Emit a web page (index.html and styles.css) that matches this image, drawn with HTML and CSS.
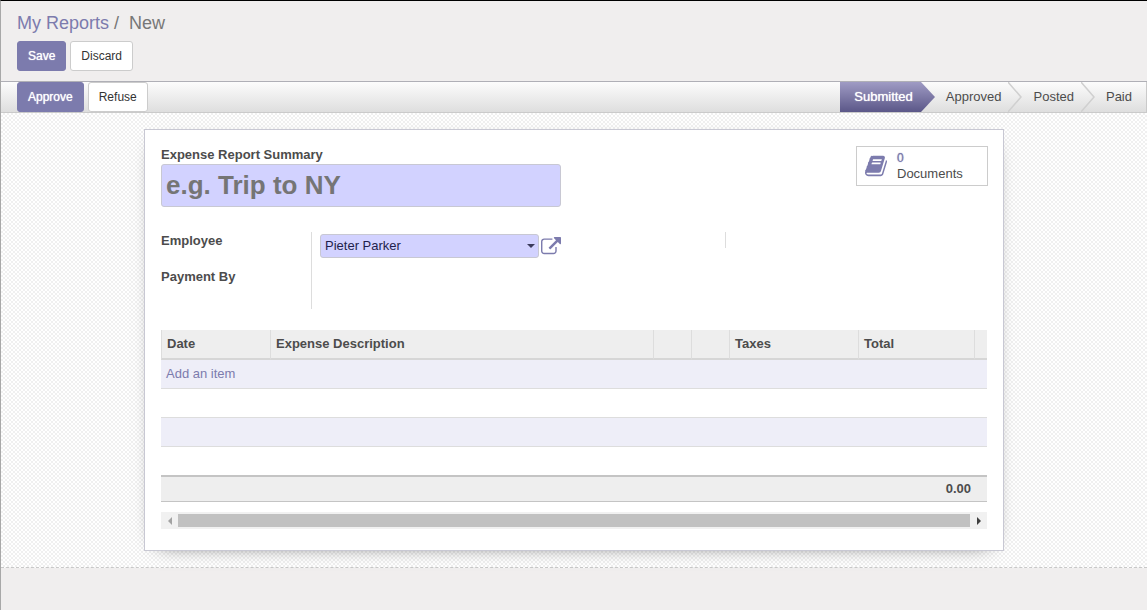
FILE: index.html
```html
<!DOCTYPE html>
<html lang="en">
<head>
    <meta charset="UTF-8">
    <meta name="viewport" content="width=device-width, initial-scale=1.0">
    <title>My Reports / New</title>
    <link rel="stylesheet" href="styles.css">
</head>
<body>
    <header class="control-panel">
        <nav class="breadcrumb">
            <a href="#">My Reports</a>
            <span>/</span>
            <span class="current">New</span>
        </nav>
        <div class="buttons">
            <button class="btn btn-primary" type="button">Save</button>
            <button class="btn" type="button">Discard</button>
        </div>
    </header>

    <div class="statusbar">
        <div class="buttons">
            <button class="btn btn-primary" type="button">Approve</button>
            <button class="btn" type="button">Refuse</button>
        </div>
        <ol class="steps">
            <li class="step active">
                <span class="step-name">Submitted</span>
                <svg class="step-arrow" viewBox="0 0 14 30">
                    <defs>
                        <linearGradient id="arrow-fill" x1="0" y1="0" x2="0" y2="1">
                            <stop offset="0" stop-color="#9f9bc4"/>
                            <stop offset="1" stop-color="#5b5788"/>
                        </linearGradient>
                    </defs>
                    <path d="M0 0L14 15L0 30z" fill="url(#arrow-fill)"/>
                </svg>
            </li>
            <li class="step">
                <span class="step-name">Approved</span>
                <svg class="step-arrow" viewBox="0 0 14 30"><path d="M0 0L13 15L0 30" fill="none" stroke="#d0d0d0" stroke-width="1.5"/></svg>
            </li>
            <li class="step">
                <span class="step-name">Posted</span>
                <svg class="step-arrow" viewBox="0 0 14 30"><path d="M0 0L13 15L0 30" fill="none" stroke="#d0d0d0" stroke-width="1.5"/></svg>
            </li>
            <li class="step">
                <span class="step-name">Paid</span>
            </li>
        </ol>
    </div>

    <main class="form-bg">
        <form class="sheet">
            <div class="sheet-head">
                <div class="title">
                    <label for="summary">Expense Report Summary</label>
                    <input type="text" id="summary" placeholder="e.g. Trip to NY">
                </div>
                <button class="stat-button" type="button">
                    <svg class="book" viewBox="0 0 1664 1792"><path fill="currentColor" d="M1639 478q40 57 18 129l-275 906q-19 64-76.5 107.5t-122.5 43.5h-923q-77 0-148.5-53.5t-99.5-131.5q-24-67-2-127 0-4 3-27t4-37q1-8-3-21.5t-3-19.5q2-11 8-21t16.5-23.5 16.5-23.5q23-38 45-91.5t30-91.5q3-10 .5-30t-.5-28q3-11 17-28t17-23q21-36 42-92t25-90q1-9-2.5-32t.5-28q4-13 22-30.5t22-22.5q19-26 42.5-84.5t27.5-96.5q1-8-3-25.5t-2-26.5q2-8 9-18t18-23 17-21q8-12 16.5-30.5t15-35 16-36 19.5-32 26.5-23.5 36-11.5 47.5 5.5l-1 3q38-9 51-9h761q74 0 114 56t18 130l-274 906q-36 119-71.5 153.5t-128.5 34.5h-869q-27 0-38 15-11 16-1 43 24 70 144 70h923q29 0 56-15.5t35-41.5l300-987q7-22 5-57 38 15 59 43zm-1064 2q-4 13 2 22.5t20 9.5h608q13 0 25.5-9.5t16.5-22.5l21-64q4-13-2-22.5t-20-9.5h-608q-13 0-25.5 9.5t-16.5 22.5zm-83 256q-4 13 2 22.5t20 9.5h608q13 0 25.5-9.5t16.5-22.5l21-64q4-13-2-22.5t-20-9.5h-608q-13 0-25.5 9.5t-16.5 22.5z"/></svg>
                    <span class="stat-info">
                        <span class="stat-value">0</span>
                        <span>Documents</span>
                    </span>
                </button>
            </div>

            <div class="groups">
                <div class="group">
                    <div class="labels">
                        <label for="employee">Employee</label>
                        <span>Payment By</span>
                    </div>
                    <div class="values">
                        <div class="select-wrap">
                            <select id="employee">
                                <option>Pieter Parker</option>
                            </select>
                            <svg class="caret" viewBox="0 0 8 4"><path d="M0 0h8L4 4z" fill="#3b3b5c"/></svg>
                        </div>
                        <button class="link-button" type="button" aria-label="External link">
                            <svg viewBox="0 0 1792 1792"><path fill="currentColor" d="M1408 928v320q0 119-84.5 203.5t-203.5 84.5h-832q-119 0-203.5-84.5t-84.5-203.5v-832q0-119 84.5-203.5t203.5-84.5h704q14 0 23 9t9 23v64q0 14-9 23t-23 9h-704q-66 0-113 47t-47 113v832q0 66 47 113t113 47h832q66 0 113-47t47-113v-320q0-14 9-23t23-9h64q14 0 23 9t9 23zm384-864v512q0 26-19 45t-45 19-45-19l-176-176-652 652q-10 10-23 10t-23-10l-114-114q-10-10-10-23t10-23l652-652-176-176q-19-19-19-45t19-45 45-19h512q26 0 45 19t19 45z"/></svg>
                        </button>
                    </div>
                </div>
                <div class="group group-empty">
                    <div class="labels"></div>
                    <div class="values"></div>
                </div>
            </div>

            <table class="lines">
                <colgroup>
                    <col class="col-date">
                    <col>
                    <col class="col-small">
                    <col class="col-small">
                    <col class="col-taxes">
                    <col class="col-total">
                    <col class="col-delete">
                </colgroup>
                <thead>
                    <tr>
                        <th>Date</th>
                        <th>Expense Description</th>
                        <th></th>
                        <th></th>
                        <th>Taxes</th>
                        <th>Total</th>
                        <th></th>
                    </tr>
                </thead>
                <tbody>
                    <tr><td colspan="7"><a href="#">Add an item</a></td></tr>
                    <tr><td colspan="7"></td></tr>
                    <tr><td colspan="7"></td></tr>
                    <tr><td colspan="7"></td></tr>
                </tbody>
                <tfoot>
                    <tr>
                        <td colspan="6">0.00</td>
                        <td></td>
                    </tr>
                </tfoot>
            </table>

            <div class="scrollbar">
                <button class="scroll-button" type="button" aria-label="Scroll left">
                    <svg viewBox="0 0 4 8"><path d="M4 0v8L0 4z" fill="#a3a3a3"/></svg>
                </button>
                <div class="thumb"></div>
                <button class="scroll-button" type="button" aria-label="Scroll right">
                    <svg viewBox="0 0 4 8"><path d="M0 0v8l4-4z" fill="#404040"/></svg>
                </button>
            </div>
        </form>
    </main>
</body>
</html>
```
FILE: styles.css
```css
* {
    box-sizing: border-box;
}

body {
    display: flex;
    flex-direction: column;
    min-height: 100vh;
    margin: 0;
    border-top: 1px solid #000;
    border-left: 1px solid #a8a8a8;
    background: #f0eeee;
    color: #4c4c4c;
    font-family: "Liberation Sans", Arial, sans-serif;
    font-size: 13px;
    line-height: 20px;
}

a {
    color: #7c7bad;
    text-decoration: none;
}

button,
input,
select {
    font-family: inherit;
}

.control-panel {
    padding: 10px 16px;
}

.breadcrumb {
    display: flex;
    gap: 5px;
    margin-bottom: 6px;
    font-size: 18px;
    line-height: 24px;
    color: #777;
}

.breadcrumb .current {
    margin-left: 5px;
}

.buttons {
    display: flex;
    gap: 4px;
}

.btn {
    height: 30px;
    padding: 0 10px;
    border: 1px solid #ccc;
    border-radius: 3px;
    background: #fff;
    color: #333;
    font-size: 12px;
    cursor: pointer;
}

.btn-primary {
    border-color: #7c7bad;
    background: #7c7bad;
    color: #fff;
    text-shadow: 0 0 1px #fff;
}

.statusbar {
    display: flex;
    justify-content: space-between;
    border-top: 1px solid #afafb6;
    border-bottom: 1px solid #cacaca;
    background: linear-gradient(to bottom, #fcfcfc, #dedede);
    padding-left: 16px;
}

.steps {
    display: flex;
    margin: 0;
    padding: 0;
    border-right: 1px solid #cacaca;
    list-style: none;
}

.step {
    display: flex;
    line-height: 30px;
}

.step-name {
    padding: 0 7px 0 11px;
}

.step-arrow {
    width: 14px;
    height: 30px;
}

.step:last-child .step-name {
    padding-right: 14px;
}

.step.active .step-name {
    padding: 0 8px 0 14px;
    background: linear-gradient(to bottom, #9f9bc4, #5b5788);
    color: #fff;
    text-shadow: 0 0 1px #fff;
}

.form-bg {
    padding: 16px;
    border-bottom: 1px dashed #c8c8c8;
    background: repeating-conic-gradient(#f0f0f0 0 25%, #fff 0 50%) 0 0 / 4px 4px;
}

.sheet {
    max-width: 860px;
    margin: 0 auto;
    padding: 16px 15px 21px 16px;
    border: 1px solid #c8c8d3;
    background: #fff;
    box-shadow: 0 5px 20px -15px #000;
}

.sheet-head {
    display: flex;
    justify-content: space-between;
    align-items: flex-start;
    margin-bottom: 25px;
}

.title {
    width: 400px;
}

.title label {
    display: block;
    font-weight: bold;
    line-height: 18px;
}

.title input {
    display: block;
    width: 100%;
    height: 43px;
    padding: 0 4px;
    border: 1px solid #c8c8d3;
    border-radius: 3px;
    background: #d2d2ff;
    font-size: 26px;
    font-weight: bold;
}

.title input::placeholder {
    color: #757575;
}

.stat-button {
    display: flex;
    align-items: center;
    gap: 10px;
    width: 132px;
    height: 40px;
    padding: 0 8px;
    border: 1px solid #ccc;
    background: #fff;
    color: #4c4c4c;
    font-size: 13px;
    line-height: 15px;
    text-align: left;
}

.book {
    width: 22px;
    height: 24px;
    color: #7c7bad;
}

.stat-info {
    display: flex;
    flex-direction: column;
}

.stat-value {
    color: #7c7bad;
    font-size: 12px;
    text-shadow: 0 0 1px #7c7bad;
}

.groups {
    display: grid;
    grid-template-columns: 1fr 1fr;
    align-items: start;
    margin-bottom: 21px;
}

.group {
    display: grid;
    grid-template-columns: 150px 1fr;
    min-height: 77px;
}

.group-empty {
    min-height: 16px;
}

.labels {
    display: flex;
    flex-direction: column;
    gap: 18px;
    font-weight: bold;
    line-height: 18px;
}

.values {
    display: flex;
    align-items: flex-start;
    gap: 2px;
    padding: 2px 14px 0 8px;
    border-left: 1px solid #ddd;
}

.select-wrap {
    position: relative;
    flex: 1;
}

.select-wrap select {
    display: block;
    width: 100%;
    height: 24px;
    padding: 0 4px 2px;
    border: 1px solid #c8c8d3;
    border-radius: 3px;
    background: #d2d2ff;
    color: #1f1f4d;
    font-size: 13px;
    appearance: none;
}

.caret {
    position: absolute;
    top: 10px;
    right: 4px;
    width: 8px;
    height: 4px;
    pointer-events: none;
}

.link-button {
    display: flex;
    align-items: center;
    height: 26px;
    padding: 0;
    border: 0;
    background: none;
    color: #7c7bad;
}

.link-button svg {
    width: 20px;
    height: 20px;
}

.lines {
    width: calc(100% - 1px);
    border-collapse: separate;
    border-spacing: 0;
    table-layout: fixed;
}

.col-date {
    width: 109px;
}

.col-small {
    width: 38px;
}

.col-taxes {
    width: 129px;
}

.col-total {
    width: 116px;
}

.col-delete {
    width: 13px;
}

.lines th {
    height: 30px;
    padding: 0 5px;
    border-bottom: 2px solid #d6d6d6;
    border-left: 1px solid #ddd;
    background: #eee;
    text-align: left;
}

.lines td {
    height: 29px;
    padding: 0 5px;
    border-bottom: 1px solid #ddd;
}

.lines tbody tr:nth-child(odd) {
    background: #eeeef8;
}

.lines tbody tr:last-child td {
    height: 28px;
    border-bottom: 0;
}

.lines tfoot td {
    height: 27px;
    padding-right: 3px;
    border-top: 2px solid #c4c4c4;
    border-bottom: 1px solid #c4c4c4;
    background: #eee;
    font-weight: bold;
    text-align: right;
}

.scrollbar {
    display: flex;
    align-items: center;
    height: 17px;
    margin: 10px 1px 0 0;
    background: #f1f1f1;
}

.thumb {
    flex: 1;
    height: 13px;
    background: #c1c1c1;
}

.scroll-button {
    display: flex;
    justify-content: center;
    align-items: center;
    width: 17px;
    height: 17px;
    padding: 0;
    border: 0;
    background: none;
}

.scroll-button svg {
    width: 4px;
    height: 8px;
}
```
